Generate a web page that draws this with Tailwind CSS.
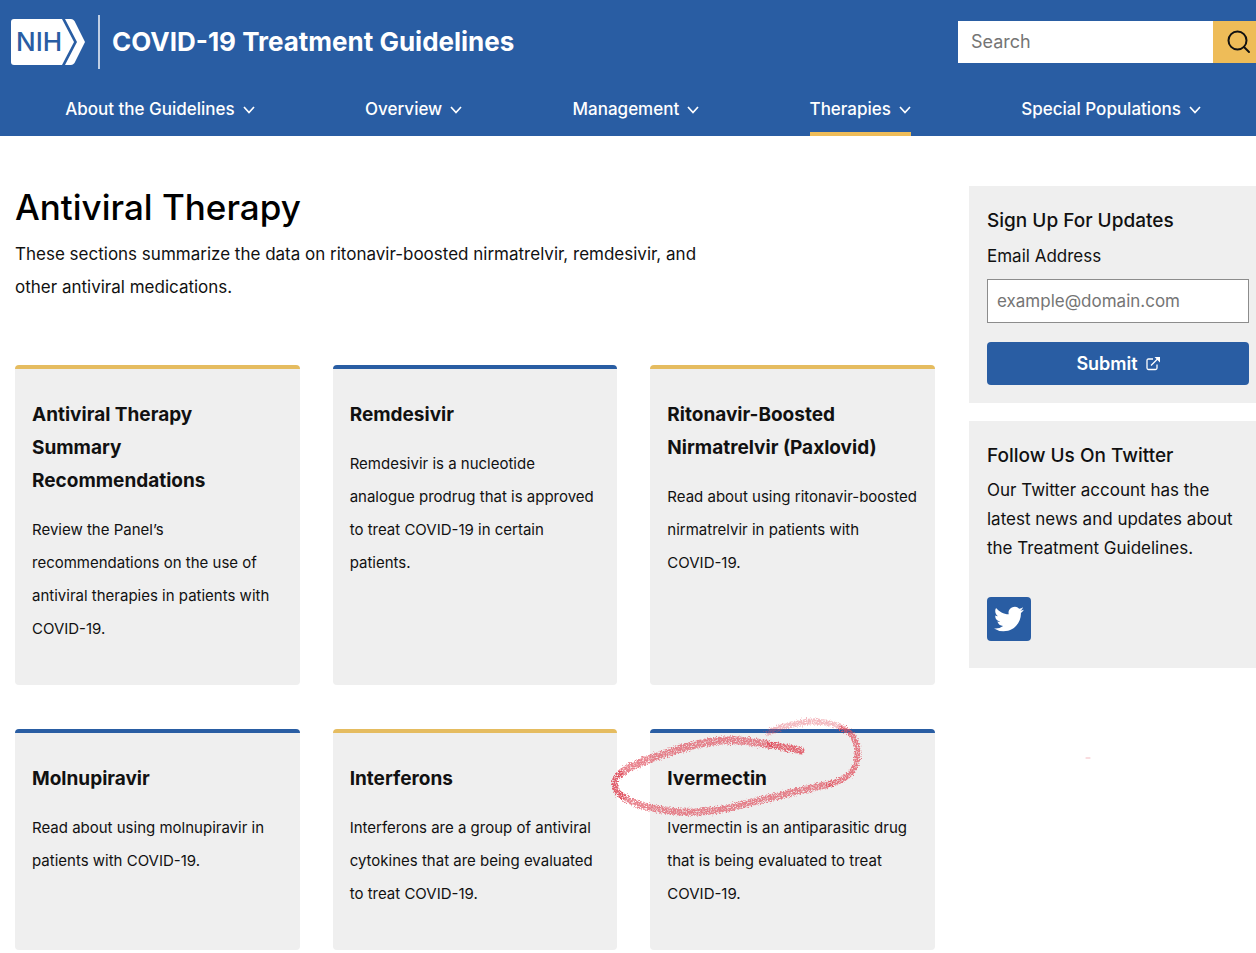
<!DOCTYPE html>
<html lang="en">
<head>
  <meta charset="UTF-8">
  <meta name="viewport" content="width=device-width, initial-scale=1.0">
  <title>Antiviral Therapy | COVID-19 Treatment Guidelines</title>
  <script src="https://cdn.jsdelivr.net/npm/@tailwindcss/browser@4"></script>
</head>
<body class="bg-white font-['Inter','Liberation_Sans',sans-serif] text-[#111111] overflow-x-hidden">
  <header class="bg-[#295da3] text-white">
    <div class="flex items-center justify-between h-[83px] pl-[11px]">
      <a href="#" class="flex items-center">
        <svg class="w-[74px] h-[46px]" viewBox="0 0 74 46" aria-label="NIH">
          <path d="M3 0H51L63 23L51 46H3Q0 46 0 43V3Q0 0 3 0Z" fill="#fff"/>
          <path d="M54 0H60Q62 0 63.500 2L74 23L63.500 44Q62 46 60 46H54L66 23Z" fill="#fff"/>
          <text x="5" y="32" font-size="26" font-weight="500" fill="#295da3">NIH</text>
        </svg>
        <span class="ml-[13px] mr-3 w-[2px] h-[54px] bg-white/70"></span>
        <span class="text-[26px] leading-8 font-bold">COVID-19 Treatment Guidelines</span>
      </a>
      <form class="flex h-[42px]">
        <input type="search" aria-label="Search" placeholder="Search" class="w-[255px] bg-white px-[13px] text-lg text-black placeholder:text-[#757575]">
        <button type="button" aria-label="Search" class="w-[43px] bg-[#eebc58] pl-[14px]">
          <svg class="w-6 h-6" viewBox="0 0 24 24" fill="none" stroke="#111" stroke-width="2" stroke-linecap="round">
            <circle cx="10.500" cy="10.500" r="9"/>
            <path d="M17 17L22 22"/>
          </svg>
        </button>
      </form>
    </div>
    <nav class="flex justify-around h-[53px] pl-[10px] text-[17px] font-medium">
      <a href="#" class="flex items-center gap-2">About the Guidelines
        <svg class="w-3 h-2" viewBox="0 0 12 8" fill="none" stroke="currentColor" stroke-width="1.700"><path d="M1 1L6 6.500L11 1"/></svg>
      </a>
      <a href="#" class="flex items-center gap-2">Overview
        <svg class="w-3 h-2" viewBox="0 0 12 8" fill="none" stroke="currentColor" stroke-width="1.700"><path d="M1 1L6 6.500L11 1"/></svg>
      </a>
      <a href="#" class="flex items-center gap-2">Management
        <svg class="w-3 h-2" viewBox="0 0 12 8" fill="none" stroke="currentColor" stroke-width="1.700"><path d="M1 1L6 6.500L11 1"/></svg>
      </a>
      <a href="#" class="flex items-center gap-2 border-b-4 border-[#eebc58] pt-1">Therapies
        <svg class="w-3 h-2" viewBox="0 0 12 8" fill="none" stroke="currentColor" stroke-width="1.700"><path d="M1 1L6 6.500L11 1"/></svg>
      </a>
      <a href="#" class="flex items-center gap-2">Special Populations
        <svg class="w-3 h-2" viewBox="0 0 12 8" fill="none" stroke="currentColor" stroke-width="1.700"><path d="M1 1L6 6.500L11 1"/></svg>
      </a>
    </nav>
  </header>

  <div class="grid grid-cols-[1fr_287px] gap-[34px] pt-[50px] pl-[15px]">
    <main>
      <h1 class="text-[35px] leading-[42px] font-medium text-black">Antiviral Therapy</h1>
      <p class="mt-[10px] max-w-[720px] text-[17px] leading-[33px]">These sections summarize the data on ritonavir-boosted nirmatrelvir, remdesivir, and other antiviral medications.</p>

      <div class="mt-[61px] grid grid-cols-3 gap-x-[33px] gap-y-[44px] text-[15px] leading-[33px]">
        <article class="rounded-sm border-t-4 border-[#e5bc60] bg-[#efefef] px-[17px] pt-[29px] pb-10">
          <h2 class="mb-4 text-[19px] leading-[33px] font-bold">Antiviral Therapy Summary Recommendations</h2>
          <p>Review the Panel’s recommendations on the use of antiviral therapies in patients with COVID-19.</p>
        </article>
        <article class="rounded-sm border-t-4 border-[#295da3] bg-[#efefef] px-[17px] pt-[29px] pb-10">
          <h2 class="mb-4 text-[19px] leading-[33px] font-bold">Remdesivir</h2>
          <p>Remdesivir is a nucleotide analogue prodrug that is approved to treat COVID-19 in certain patients.</p>
        </article>
        <article class="rounded-sm border-t-4 border-[#e5bc60] bg-[#efefef] px-[17px] pt-[29px] pb-10">
          <h2 class="mb-4 text-[19px] leading-[33px] font-bold">Ritonavir-Boosted Nirmatrelvir (Paxlovid)</h2>
          <p>Read about using ritonavir-boosted nirmatrelvir in patients with <span class="whitespace-nowrap">COVID-19.</span></p>
        </article>
        <article class="rounded-sm border-t-4 border-[#295da3] bg-[#efefef] px-[17px] pt-[29px] pb-10">
          <h2 class="mb-4 text-[19px] leading-[33px] font-bold">Molnupiravir</h2>
          <p>Read about using molnupiravir in patients with COVID-19.</p>
        </article>
        <article class="rounded-sm border-t-4 border-[#e5bc60] bg-[#efefef] px-[17px] pt-[29px] pb-10">
          <h2 class="mb-4 text-[19px] leading-[33px] font-bold">Interferons</h2>
          <p>Interferons are a group of antiviral cytokines that are being evaluated to treat COVID-19.</p>
        </article>
        <article class="relative rounded-sm border-t-4 border-[#295da3] bg-[#efefef] px-[17px] pt-[29px] pb-10">
          <h2 class="mb-4 text-[19px] leading-[33px] font-bold">Ivermectin</h2>
          <p>Ivermectin is an antiparasitic drug that is being evaluated to treat <span class="whitespace-nowrap">COVID-19.</span></p>
          <!-- red crayon circle around the heading, and a stray speck -->
          <svg class="pointer-events-none absolute -top-5 -left-[45px] w-[262px] h-[106px] max-w-none overflow-visible" viewBox="605 713 262 106" fill="none" stroke="#e0505e" stroke-linecap="round" stroke-linejoin="round">
            <filter id="crayon" x="-10%" y="-20%" width="120%" height="140%">
              <feTurbulence type="fractalNoise" baseFrequency="0.8" numOctaves="3" seed="4" result="noise"/>
              <feDisplacementMap in="SourceGraphic" in2="noise" scale="6" xChannelSelector="R" yChannelSelector="G" result="rough"/>
              <feColorMatrix in="noise" values="0 0 0 0 0  0 0 0 0 0  0 0 0 0 0  0 0 0 3 -0.600" result="grain"/>
              <feComposite in="rough" in2="grain" operator="in"/>
            </filter>
            <g filter="url(#crayon)">
              <path stroke-width="7" opacity=".85" d="M801 751C790 748 780 746 770 745"/>
              <path stroke-width="8" opacity=".7" d="M770 745C752 741 732 739 715 741C690 744 668 753 655 757C640 762 627 768 620 774"/>
              <path stroke-width="6" opacity=".9" d="M620 774C612 780 613 790 622 796"/>
              <path stroke-width="7" opacity=".7" d="M622 796C636 806 656 809 670 811C694 814 716 811 733 807C765 799 800 790 830 784"/>
              <path stroke-width="6" opacity=".75" d="M830 784C848 779 855 771 857 761C859 745 856 734 842 728"/>
              <path stroke-width="6" opacity=".4" d="M842 728C832 722 815 720 800 723C786 725 776 729 768 733"/>
            </g>
            <path stroke-width="1" opacity=".4" d="M1086 758H1090"/>
          </svg>
        </article>
      </div>
    </main>

    <aside class="text-[17px]">
      <section class="bg-[#efefef] pt-5 pr-[7px] pb-[18px] pl-[18px]">
        <h2 class="text-[19px] leading-[30px] font-medium">Sign Up For Updates</h2>
        <form>
          <label for="email" class="mt-1 block leading-8">Email Address</label>
          <input id="email" type="email" placeholder="example@domain.com" class="mt-[7px] block w-full h-[44px] border border-[#8c8c8c] bg-white px-[9px] placeholder:text-[#757575]">
          <button type="button" class="mt-[19px] flex w-full h-[43px] items-center justify-center gap-2 rounded bg-[#295da3] text-lg font-semibold text-white">Submit
            <svg class="w-[14px] h-[14px]" viewBox="0 0 14 14" fill="none" stroke="currentColor" stroke-width="1.300">
              <path d="M7 2H2.500Q1 2 1 3.500V11Q1 12.500 2.500 12.500H9.500Q11 12.500 11 11V7.500M5 8.500L12 1.500"/>
              <path d="M8.500 0H14V5.500Z" fill="currentColor" stroke="none"/>
            </svg>
          </button>
        </form>
      </section>
      <section class="mt-[18px] bg-[#efefef] pt-5 pr-[7px] pb-[27px] pl-[18px]">
        <h2 class="text-[19px] leading-[30px] font-medium">Follow Us On Twitter</h2>
        <p class="mt-[5px] leading-[29px]">Our Twitter account has the latest news and updates about the Treatment Guidelines.</p>
        <a href="#" aria-label="Twitter" class="mt-[34px] flex w-11 h-11 items-center justify-center rounded bg-[#295da3]">
          <svg class="w-[30px] h-[30px]" viewBox="0 0 24 24" fill="#fff">
            <path d="M23.950 4.570a10 10 0 0 1-2.820.770 4.960 4.960 0 0 0 2.160-2.720c-.950.550-2 .950-3.130 1.180a4.920 4.920 0 0 0-8.380 4.480C7.690 8.090 4.070 6.130 1.640 3.160a4.820 4.820 0 0 0-.670 2.480c0 1.710.870 3.210 2.190 4.100a4.900 4.900 0 0 1-2.230-.620v.060a4.920 4.920 0 0 0 3.950 4.830 5 5 0 0 1-2.210.080 4.940 4.940 0 0 0 4.600 3.420A9.870 9.870 0 0 1 0 19.540a14 14 0 0 0 7.550 2.210c9.050 0 14-7.500 14-13.980 0-.210 0-.420-.020-.630a9.940 9.940 0 0 0 2.460-2.550z"/>
          </svg>
        </a>
      </section>
    </aside>
  </div>
</body>
</html>
